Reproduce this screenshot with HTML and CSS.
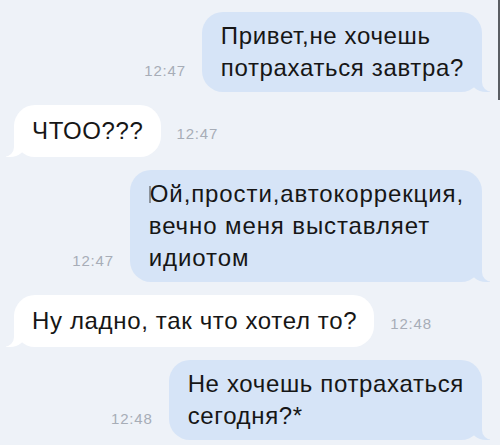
FILE: index.html
```html
<!DOCTYPE html>
<html lang="ru">
<head>
<meta charset="utf-8">
<link rel="stylesheet" href="styles.css">
</head>
<body>
<div class="chat">
  <div class="row out">
    <span class="time">12:47</span>
    <div class="bubble">Привет,не хочешь<br>потрахаться завтра?</div>
  </div>
  <div class="row in">
    <div class="bubble short">ЧТОО???</div>
    <span class="time">12:47</span>
  </div>
  <div class="row out">
    <span class="time">12:47</span>
    <div class="bubble wide"><span class="cursor"></span>Ой,прости,автокоррекция,<br>вечно меня выставляет<br>идиотом</div>
  </div>
  <div class="row in">
    <div class="bubble short">Ну ладно, так что хотел то?</div>
    <span class="time">12:48</span>
  </div>
  <div class="row out">
    <span class="time">12:48</span>
    <div class="bubble">Не хочешь потрахаться<br>сегодня?*</div>
  </div>
  <div class="scroll"></div>
</div>
</body>
</html>
```

FILE: styles.css
```css
html, body {
  margin: 0;
  padding: 0;
  background: #eef2f8;
}

.chat {
  position: relative;
  width: 500px;
  height: 445px;
  overflow: hidden;
  box-sizing: border-box;
  padding: 12px 18px 0 14px;
  display: flex;
  flex-direction: column;
  gap: 13px;
  font-family: "Liberation Sans", Arial, sans-serif;
}

.row {
  display: flex;
  align-items: last baseline;
  gap: 16px;
}

.row.out {
  justify-content: flex-end;
}

.row.in {
  justify-content: flex-start;
}

.bubble {
  position: relative;
  padding: 8px 18px 8px 19px;
  border-radius: 21px;
  font-size: 24px;
  line-height: 32px;
  letter-spacing: 0.65px;
  color: #161616;
  white-space: nowrap;
}

.bubble.wide {
  letter-spacing: 0.9px;
}

.bubble.short {
  padding: 10px 17px 10px 18px;
}

.out .bubble {
  background: #d6e4f7;
}

.in .bubble {
  background: #ffffff;
}

.out .bubble::before {
  content: "";
  position: absolute;
  right: -8px;
  bottom: 0;
  width: 20px;
  height: 20px;
  background: #d6e4f7;
  border-bottom-left-radius: 16px 14px;
}

.out .bubble::after {
  content: "";
  position: absolute;
  right: -26px;
  bottom: 0;
  width: 26px;
  height: 20px;
  background: #eef2f8;
  border-bottom-left-radius: 10px;
}

.in .bubble::before {
  content: "";
  position: absolute;
  left: -8px;
  bottom: 0;
  width: 20px;
  height: 20px;
  background: #ffffff;
  border-bottom-right-radius: 16px 14px;
}

.in .bubble::after {
  content: "";
  position: absolute;
  left: -26px;
  bottom: 0;
  width: 26px;
  height: 20px;
  background: #eef2f8;
  border-bottom-right-radius: 10px;
}

.time {
  font-size: 15px;
  color: #a7adb7;
  letter-spacing: 0.8px;
}

.cursor {
  display: inline-block;
  width: 2px;
  height: 17px;
  margin-right: -1px;
  background: #8c939c;
  vertical-align: -1px;
}

.scroll {
  position: absolute;
  right: 0;
  top: 0;
  width: 2px;
  height: 100px;
  background: #5a5e63;
}
```
